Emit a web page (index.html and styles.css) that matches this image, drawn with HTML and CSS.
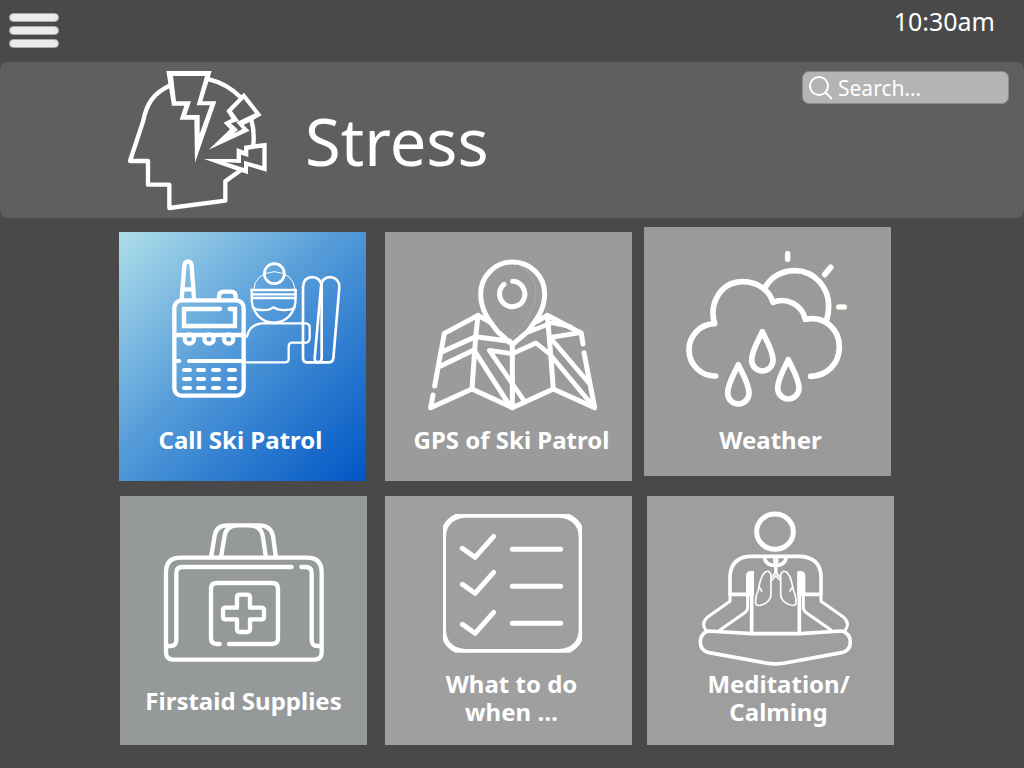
FILE: index.html
```html
<!DOCTYPE html>
<html lang="en">
<head>
<meta charset="utf-8">
<meta name="viewport" content="width=device-width, initial-scale=1">
<title>Stress</title>
<link rel="stylesheet" href="styles.css">
</head>
<body>
<header class="topbar">
  <button class="menu" type="button" aria-label="Menu"><span class="menu-bar"></span><span class="menu-bar"></span><span class="menu-bar"></span></button>
  <time class="clock" datetime="10:30">10:30am</time>
</header>

<section class="banner">
  <svg class="banner-icon" viewBox="0 6 540 468" aria-hidden="true">
    <g class="line" stroke-width="13">
      <path d="M181 76C130 100 110 130 99 185L60 303H114V374H178V444L346 422V364L390 332"/>
      <path d="M297 58Q350 70 392 112M424 180Q434 212 430 254"/>
    </g>
    <g class="solid">
      <path d="M169 33H305L277 124H319L255 308L253 179H209L223 137H186ZM189 48L198 124H243L229 165H269V222L300 136H260L285 48Z"/>
      <path d="M402 98L455 166L401 195L419 212L296 269L360 208L341 188L364 176L349 152ZM401 117L366 153L387 182L363 190L384 209L372 221L397 207L379 187L435 160Z"/>
      <path d="M470 248V335L414 319V343L282 297L380 297V264L402 272V257ZM457 263L415 269V291L393 284V309L347 307L402 324V302L457 318Z"/>
    </g>
  </svg>
  <h1 class="banner-title">Stress</h1>
  <label class="search">
    <svg class="search-icon" viewBox="0 0 24 24" aria-hidden="true"><circle cx="10" cy="10" r="9"/><path d="M16 16L23 23"/></svg>
    <input class="search-input" type="search" placeholder="Search…" aria-label="Search">
  </label>
</section>

<main class="tiles">
  <div class="row row-first">
    <a class="tile tile-call" href="#call">
      <svg class="tile-icon" viewBox="0 6 741 582" aria-hidden="true">
        <g class="line" stroke-width="13">
          <rect x="166" y="211" width="208" height="286" rx="22"/>
          <path d="M188 205L196 108Q197 94 207 94Q217 94 218 108L225 205M192 178H222" stroke-width="13"/>
          <path d="M300 205V199Q300 185 314 185H336Q350 185 350 199V205"/>
          <path class="mitre" d="M303 237H195V288H348V237H332"/>
          <path class="butt" d="M166 315H374"/>
          <circle cx="211" cy="327" r="14"/>
          <circle cx="270" cy="327" r="14"/>
          <circle cx="329" cy="327" r="14"/>
          <path d="M172 393H181M210 393H374" stroke-width="12"/>
          <path d="M195 420H213M237 420H255M282 420H300M330 420H348M195 447H213M237 447H255M282 447H300M330 447H348M195 474H213M237 474H255M282 474H300M330 474H348" stroke-width="12"/>
        </g>
        <g class="line" stroke-width="7">
          <circle cx="466" cy="131" r="30" stroke-width="8"/>
          <path d="M404 178Q408 130 466 125Q524 130 528 178" stroke-width="3"/>
          <path class="butt" d="M394 180H533M397 193H531M397 204H531"/>
          <path d="M398 180V205C398 250 430 278 464 278C500 278 530 250 530 205V180"/>
          <path d="M402 232Q410 240 425 240Q450 242 463 232Q478 242 500 240Q520 240 527 232"/>
          <path d="M384 320Q390 284 428 280H562Q572 282 572 292V325Q570 338 560 338H517Q509 340 509 350V388Q508 397 498 397H384"/>
          <path d="M552 385V170Q554 142 580 141Q606 143 608 170V385Q607 397 596 397H562Q552 396 552 385Z" stroke-width="8"/>
          <path d="M587 385L606 170Q608 142 634 141Q662 145 661 172L643 385Q641 397 632 397H597Q587 396 587 385Z" stroke-width="8"/>
        </g>
      </svg>
      <span class="tile-label label-call">Call Ski Patrol</span>
    </a>

    <a class="tile tile-gps" href="#gps">
      <svg class="tile-icon" viewBox="3 6 741 582" aria-hidden="true">
        <g class="line" stroke-width="15">
          <path d="M385 344L340 304C315 272 290 240 290 192A96 96 0 0 1 482 192C482 240 455 272 432 304Z" class="pin"/>
          <path d="M386 154A38 38 0 1 1 360 163"/>
          <path d="M147 495L140 533L264 477L385 533L508 477L632 533L600 368"/>
          <path d="M152 468L181 310L282 256L318 276M282 256L275 320L264 477"/>
          <path d="M178 364L275 320L378 334M170 408L270 360L374 522M385 345V533"/>
          <path d="M420 512L316 361L385 371L456 339L497 372L622 522" stroke-width="14"/>
          <path d="M458 275L490 256L592 310L597 342M490 256L500 372L508 477"/>
          <path d="M436 305L505 278L560 290M500 322L590 308M500 325L614 458" stroke-width="14"/>
        </g>
        <path class="hair" d="M400 103Q458 130 456 192Q454 255 380 330"/>
      </svg>
      <span class="tile-label label-right">GPS of Ski Patrol</span>
    </a>

    <a class="tile tile-weather" href="#weather">
      <svg class="tile-icon" viewBox="3 3 741 597" aria-hidden="true">
        <g class="line" stroke-width="17">
          <path d="M218 450A78 78 0 1 1 215 293C198 238 228 168 300 167C345 167 380 195 390 229C430 213 477 235 487 280C545 268 590 310 589 365C588 415 550 450 503 451"/>
          <path d="M366 185C385 150 420 134 455 134C515 134 557 185 557 240Q557 262 551 282"/>
          <path d="M545 146L563 124"/>
          <path class="ray-glow" d="M434 83V100M587 243H604"/>
          <path d="M434 83V100M587 243H604" stroke-width="14"/>
          <path d="M358 317C345 345 326 375 326 402A32 33 0 0 0 390 402C390 375 371 345 358 317Z"/>
          <path d="M286 416C273 444 254 474 254 501A32 33 0 0 0 318 501C318 474 299 444 286 416Z"/>
          <path d="M436 401C423 429 404 459 404 486A32 33 0 0 0 468 486C468 459 449 429 436 401Z"/>
        </g>
      </svg>
      <span class="tile-label label-right">Weather</span>
    </a>
  </div>

  <div class="row row-second">
    <a class="tile tile-firstaid" href="#firstaid">
      <svg class="tile-icon" viewBox="3 6 741 573" aria-hidden="true">
        <g class="line" stroke-width="13">
          <path d="M141 235Q141 191 185 191H564Q608 191 608 235V475Q608 497 586 497H163Q141 497 141 475Z"/>
          <path d="M518 219H190Q172 219 172 237V437Q172 456 154 456H147M547 219H560Q578 219 578 237V437Q578 456 596 456H604"/>
          <path d="M277 185L287 125Q292 94 325 94H420Q455 94 462 125L470 185M307 185L316 130Q320 94 355 94M390 94Q428 94 432 130L440 185"/>
          <path d="M330 450H460Q477 450 477 433V284Q477 267 460 267H293Q276 267 276 284V433Q276 450 293 450H302"/>
          <path d="M362 302H385Q393 302 393 310V341H427Q435 341 435 349V368Q435 376 427 376H393V406Q393 414 385 414H362Q354 414 354 406V376H320Q312 376 312 368V349Q312 341 320 341H354V310Q354 302 362 302Z"/>
        </g>
      </svg>
      <span class="tile-label">Firstaid Supplies</span>
    </a>

    <a class="tile tile-todo" href="#what-to-do">
      <svg class="tile-icon" viewBox="3 6 741 522" aria-hidden="true">
        <path class="solid" d="M215 60H556Q582 72 594 95V440Q582 464 556 476H215Q189 464 177 440V95Q189 72 215 60ZM246 71Q186 75 186 131V405Q186 461 246 465H524Q584 461 584 405V131Q584 75 524 71Z"/>
        <g class="line" stroke-width="15">
          <path d="M235 163L273 190L329 127M235 271L273 298L329 235M235 391L273 418L329 355"/>
          <path d="M385 166H530M385 277H530M385 388H530"/>
        </g>
      </svg>
      <span class="tile-label label-right">What to do<br>when …</span>
    </a>

    <a class="tile tile-calm" href="#calming">
      <svg class="tile-icon" viewBox="6 6 741 522" aria-hidden="true">
        <g class="line" stroke-width="11">
          <ellipse cx="390" cy="113" rx="55" ry="53" stroke-width="15"/>
          <path d="M255 301V245Q260 187 320 187H465Q525 190 528 245V301"/>
          <path d="M255 301H315M470 301H528"/>
          <path d="M358 190Q362 215 391 215Q420 215 424 190"/>
          <path d="M320 240V415M463 240V415"/>
          <path d="M255 305V322L187 370Q167 388 182 408M308 305V338Q308 350 298 357L225 408M528 305V322L596 370Q616 388 601 408M475 305V338Q475 350 485 357L558 408" stroke-width="9"/>
          <path d="M190 411L320 419H465L590 411Q616 418 616 445Q616 470 590 476L420 507Q391 512 362 507L192 476Q166 470 166 445Q166 418 190 411Z"/>
        </g>
        <path class="solid" d="M303 306V245Q304 231 318 231H327V306ZM481 306V245Q480 231 466 231H457V306Z"/>
        <g class="line" stroke-width="5">
          <path d="M387 205V194H398V205M390 200V238L379 250M395 200V238L406 250M381 258L392 245L404 258"/>
          <path d="M378 245Q376 228 362 233C347 242 344 268 340 288C332 306 330 320 333 331Q342 340 364 326Q378 316 378 300ZM342 280Q347 283 350 292"/>
          <path d="M407 245Q409 228 423 233C438 242 441 268 445 288C453 306 455 320 452 331Q443 340 421 326Q407 316 407 300ZM443 280Q438 283 435 292"/>
        </g>
      </svg>
      <span class="tile-label label-calm">Meditation/<br>Calming</span>
    </a>
  </div>
</main>
</body>
</html>
```
FILE: styles.css
```css
* {
  box-sizing: border-box;
}

body {
  margin: 0;
  background: #494949;
  color: #fff;
  font-family: "Noto Sans", "Open Sans", sans-serif;
}

.topbar {
  display: flex;
  justify-content: space-between;
  align-items: flex-start;
  min-height: 62px;
  padding: 4px 29px 0 9px;
}

.menu {
  display: flex;
  flex-direction: column;
  gap: 4px;
  margin-top: 9px;
  padding: 0;
  border: 0;
  background: none;
  cursor: pointer;
}

.menu-bar {
  width: 50px;
  height: 9px;
  border: 1px solid #a8a8a8;
  border-radius: 5px;
  background: #ebebeb;
}

.clock {
  font-size: 25px;
  line-height: 34px;
}

.banner {
  display: flex;
  align-items: center;
  min-height: 156px;
  padding: 0 15px 0 110px;
  border-radius: 8px;
  background: #605e5f;
}

.banner-icon {
  width: 180px;
  flex: none;
}

.banner-title {
  margin: 2px 0 0 15px;
  font-size: 65px;
  font-weight: 400;
  line-height: 68px;
}

.search {
  display: flex;
  align-items: center;
  align-self: flex-start;
  gap: 5px;
  width: 207px;
  height: 33px;
  margin: 9px 0 0 auto;
  padding: 0 6px;
  border: 1px solid #8c8c8c;
  border-radius: 7px;
  background: #b4b4b4;
}

.search-icon {
  width: 24px;
  height: 24px;
  flex: none;
  fill: none;
  stroke: #fff;
  stroke-width: 2;
}

.search-input {
  flex: 1;
  min-width: 0;
  padding: 0;
  border: 0;
  outline: 0;
  background: none;
  color: #fff;
  font: inherit;
  font-size: 21px;
}

.search-input::placeholder {
  color: #fff;
  opacity: 1;
}

.row {
  display: flex;
  align-items: flex-start;
}

.row-first {
  padding: 14px 133px 0 119px;
}

.row-second {
  padding: 15px 130px 23px 120px;
}

.tile {
  display: flex;
  flex: 1;
  flex-direction: column;
  min-width: 0;
  min-height: 249px;
  color: #fff;
  text-decoration: none;
}

.tile-call {
  background: linear-gradient(135deg, #aedfea 0%, #539ad8 46%, #0056c5 100%);
}

.tile-gps {
  margin-left: 19px;
  background: #9b9b9b;
}

.tile-weather {
  margin-top: -5px;
  margin-left: 12px;
  background: #9a9a9a;
}

.tile-firstaid {
  background: #959999;
}

.tile-todo {
  margin-left: 18px;
  background: #9f9f9f;
}

.tile-calm {
  margin-left: 15px;
  background: #9e9e9e;
}

.tile-icon {
  display: block;
  width: 100%;
}

.tile-label {
  font-size: 24px;
  font-weight: 700;
  line-height: 28px;
  text-align: center;
}

.label-call {
  padding-right: 4px;
}

.label-right {
  padding-left: 6px;
}

.label-calm {
  padding-left: 16px;
}

.line {
  fill: none;
  stroke: #fff;
  stroke-linecap: round;
  stroke-linejoin: round;
}

.mitre {
  stroke-linejoin: miter;
}

.butt {
  stroke-linecap: butt;
}

.ray-glow {
  stroke: #ece3c0;
}

.solid {
  fill: #fff;
  fill-rule: evenodd;
}

.pin {
  fill: #9b9b9b;
}

.hair {
  fill: none;
  stroke: #b4b4b4;
  stroke-width: 2;
}
```
